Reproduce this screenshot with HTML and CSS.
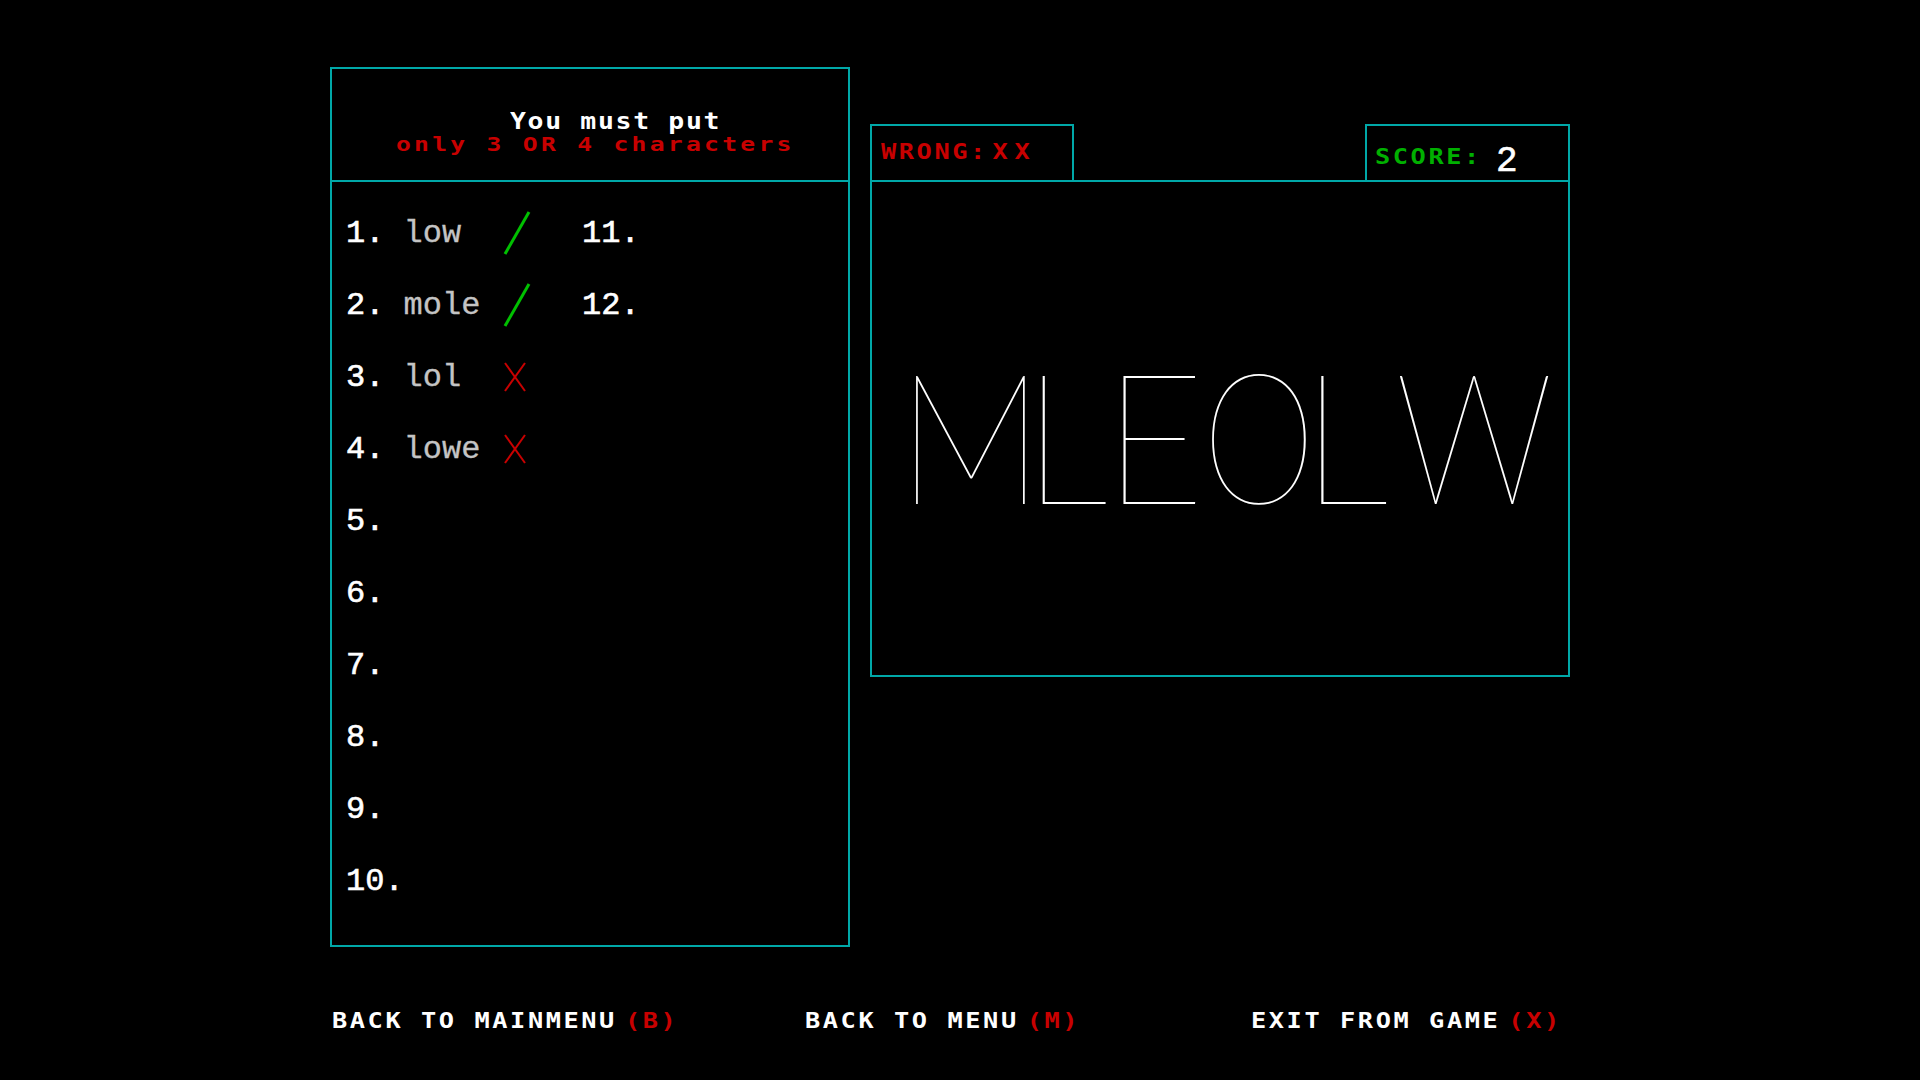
FILE: index.html
```html
<!DOCTYPE html>
<html lang="en">
<head>
<meta charset="utf-8">
<title>Word game</title>
<link rel="stylesheet" href="styles.css">
</head>
<body>
<div class="screen">
  <div class="board">
    <section class="panel words">
      <header class="words-head">
        <div class="head-line1 pix">You must put</div>
        <div class="head-line2 pix">only 3 OR 4 characters</div>
      </header>
      <div class="list">
        <div class="col">
          <div class="row"><span class="num">1.</span><span class="word">low</span><span class="mark"><svg class="check" width="28" height="46" viewBox="0 0 28 46"><line x1="2" y1="44" x2="26" y2="2" stroke="#00c000" stroke-width="3"/></svg></span></div>
          <div class="row"><span class="num">2.</span><span class="word">mole</span><span class="mark"><svg class="check" width="28" height="46" viewBox="0 0 28 46"><line x1="2" y1="44" x2="26" y2="2" stroke="#00c000" stroke-width="3"/></svg></span></div>
          <div class="row"><span class="num">3.</span><span class="word">lol</span><span class="mark"><svg class="cross" width="24" height="32" viewBox="0 0 24 32"><line x1="2" y1="2" x2="22" y2="30" stroke="#c80000" stroke-width="2"/><line x1="22" y1="2" x2="2" y2="30" stroke="#c80000" stroke-width="2"/></svg></span></div>
          <div class="row"><span class="num">4.</span><span class="word">lowe</span><span class="mark"><svg class="cross" width="24" height="32" viewBox="0 0 24 32"><line x1="2" y1="2" x2="22" y2="30" stroke="#c80000" stroke-width="2"/><line x1="22" y1="2" x2="2" y2="30" stroke="#c80000" stroke-width="2"/></svg></span></div>
          <div class="row"><span class="num">5.</span></div>
          <div class="row"><span class="num">6.</span></div>
          <div class="row"><span class="num">7.</span></div>
          <div class="row"><span class="num">8.</span></div>
          <div class="row"><span class="num">9.</span></div>
          <div class="row"><span class="num">10.</span></div>
        </div>
        <div class="col">
          <div class="row"><span class="num">11.</span></div>
          <div class="row"><span class="num">12.</span></div>
        </div>
      </div>
    </section>
    <section class="game">
      <div class="tabs">
        <div class="tab tab-wrong"><span class="pix pix-text wrong">WRONG:<span class="gap">XX</span></span></div>
        <div class="tab tab-score"><span class="pix pix-text score-label">SCORE:</span><span class="score-value">2</span></div>
      </div>
      <div class="panel display">
        <svg class="letters" width="696" height="493" viewBox="0 0 696 493">
          <text transform="translate(25 322) scale(0.9 1)">M</text>
          <text transform="translate(150.9 322) scale(0.93 1)">L</text>
          <text transform="translate(231.2 322) scale(0.955 1)">E</text>
          <text transform="translate(330.3 322) scale(0.79 1)">O</text>
          <text transform="translate(428.9 322) scale(0.958 1)">L</text>
          <text transform="translate(522.9 322) scale(0.863 1)">W</text>
        </svg>
      </div>
    </section>
  </div>
  <nav class="menu">
    <div class="menu-item item-1"><span class="pix pix-text">BACK TO MAINMENU<span class="key">(B)</span></span></div>
    <div class="menu-item item-2"><span class="pix pix-text">BACK TO MENU<span class="key">(M)</span></span></div>
    <div class="menu-item item-3"><span class="pix pix-text">EXIT FROM GAME<span class="key">(X)</span></span></div>
  </nav>
</div>
</body>
</html>
```
FILE: styles.css
```css
* { box-sizing: border-box; }
html, body { margin: 0; padding: 0; background: #000; }
body {
  width: 1920px;
  height: 1080px;
  overflow: hidden;
  color: #fff;
  font-family: "DejaVu Sans Mono", monospace;
}

.screen { padding: 67px 0 0 330px; }
.board { display: flex; gap: 20px; align-items: flex-start; }

.panel { border: 2px solid #00a8a8; }

.pix {
  font-family: "DejaVu Sans Mono", monospace;
  font-weight: 700;
  white-space: pre;
}

/* left panel */
.words {
  width: 520px;
  height: 880px;
  display: flex;
  flex-direction: column;
}
.words-head {
  height: 113px;
  border-bottom: 2px solid #00a8a8;
  padding-top: 40px;
}
.head-line1 {
  width: max-content;
  margin-left: 177.5px;
  font-size: 23px;
  line-height: 24px;
  letter-spacing: 1.45px;
  color: #fff;
  transform: scaleX(1.15);
  transform-origin: left center;
}
.head-line2 {
  width: max-content;
  margin-left: 64px;
  font-size: 19px;
  line-height: 23px;
  letter-spacing: 2.5px;
  color: #c80000;
  transform: scaleX(1.3);
  transform-origin: left center;
}

.list {
  display: grid;
  grid-template-columns: 236px auto;
  padding: 16px 0 0 14px;
}
.col { display: flex; flex-direction: column; }
.row {
  display: flex;
  align-items: flex-start;
  height: 72px;
  font-family: "Liberation Mono", monospace;
  font-size: 32px;
  line-height: 72px;
  white-space: pre;
}
.num {
  width: 57.6px;
  flex: none;
  color: #fff;
  -webkit-text-stroke: 0.6px #fff;
}
.word {
  width: 99.7px;
  flex: none;
  color: #c4c4c4;
  -webkit-text-stroke: 0.3px #c4c4c4;
}
.mark svg { display: block; }
.check { margin-top: 12px; }
.cross { margin-top: 19px; }

/* right panel */
.game {
  width: 700px;
  margin-top: 57px;
  display: flex;
  flex-direction: column;
}
.tabs {
  display: flex;
  justify-content: space-between;
  height: 56px;
}
.tab {
  height: 56px;
  border: 2px solid #00a8a8;
  border-bottom: none;
}
.tab-wrong {
  width: 204px;
  padding: 14.4px 0 0 8.5px;
}
.tab-score {
  width: 205px;
  display: flex;
  align-items: flex-start;
  padding-left: 7.5px;
}
.pix-text {
  display: inline-block;
  font-size: 22px;
  line-height: 24px;
  letter-spacing: 2.24px;
  transform: scaleX(1.15);
  transform-origin: left center;
}
.wrong { color: #c80000; }
.gap { margin-left: 4px; letter-spacing: 6px; }
.score-label {
  color: #00b000;
  margin-top: 19.4px;
}
.score-value {
  margin-left: 28.6px;
  margin-top: 17.8px;
  font-family: "Liberation Mono", monospace;
  font-size: 36px;
  line-height: 36px;
  color: #fff;
  -webkit-text-stroke: 0.6px #fff;
}
.display { height: 497px; }
.letters { display: block; }
.letters text {
  font-family: "Lato", "Roboto", sans-serif;
  font-weight: 100;
  font-size: 183px;
  letter-spacing: -24px;
  fill: #fff;
}

/* bottom menu */
.menu {
  display: flex;
  margin-top: 62.4px;
  padding-left: 2px;
}
.menu-item { flex: none; color: #fff; }
.item-1 { width: 472.7px; }
.item-2 { width: 446px; }
.key { color: #c80000; margin-left: 7px; }
```
